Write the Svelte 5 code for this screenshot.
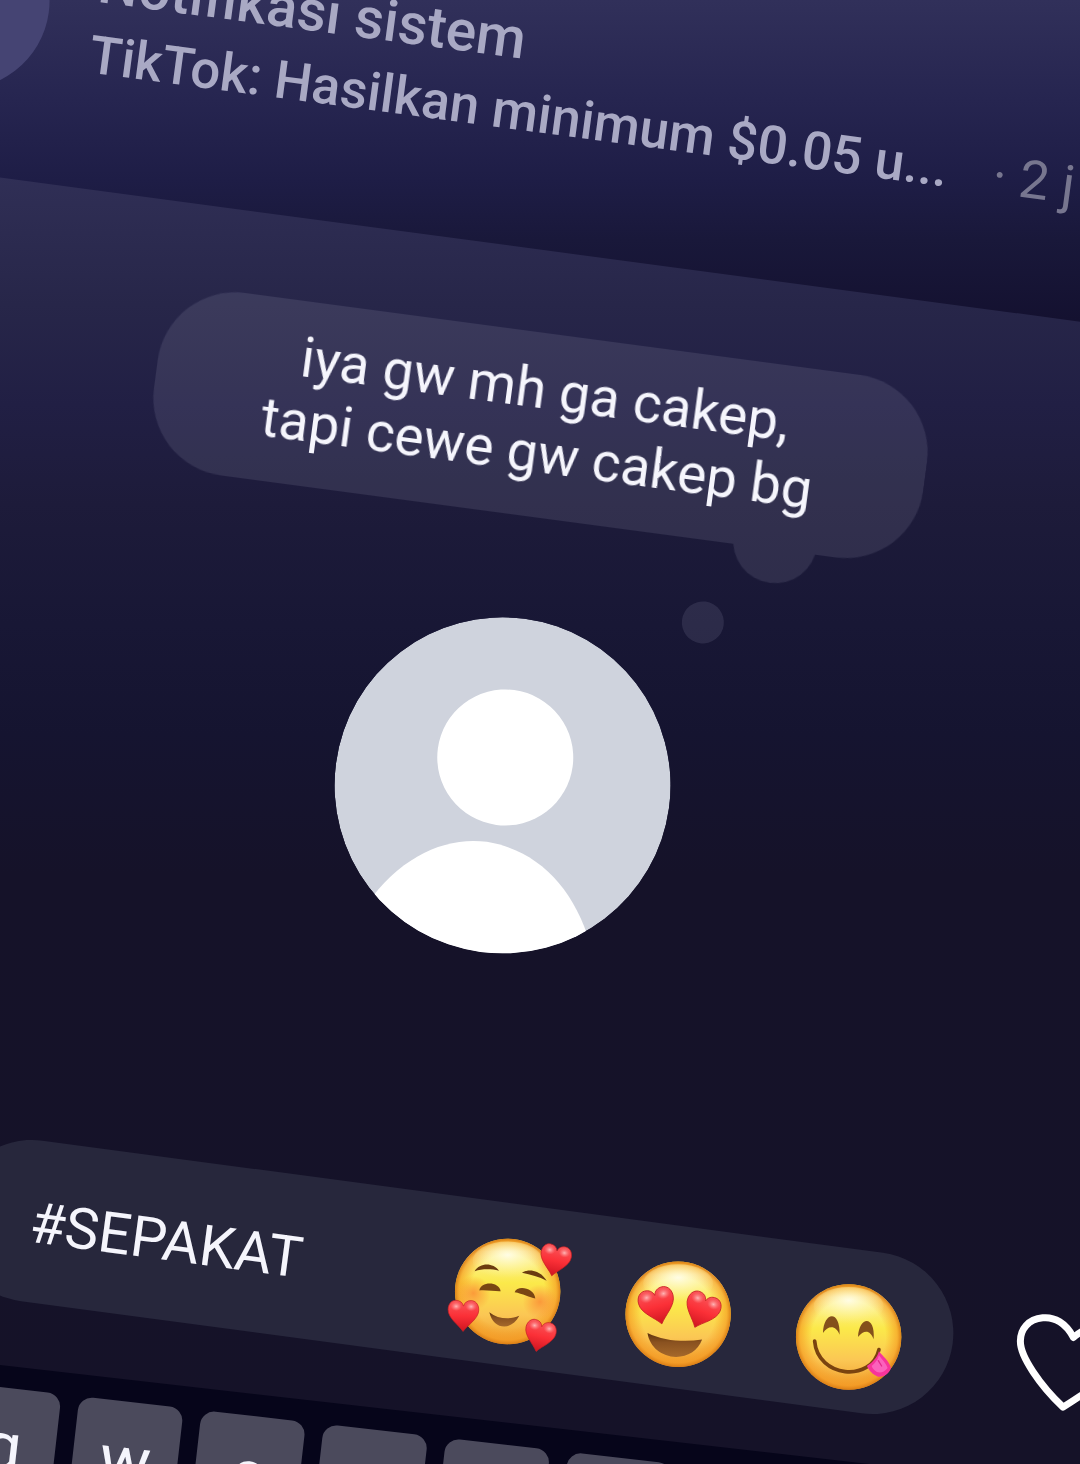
<script>
  let message = $state('#SEPAKAT');
  let liked = $state(false);

  const keys = ['q', 'w', 'e', 'r', 't', 'y', 'u', 'i', 'o', 'p'];
  const heart =
    'M0,47 C-14,27 -46,8 -46,-18 C-46,-36 -35,-46 -23,-46 C-11,-46 -3,-40 0,-29 C3,-40 11,-46 23,-46 C35,-46 46,-36 46,-18 C46,8 14,27 0,47Z';
</script>

<svelte:head>
  <title>#SEPAKAT</title>
</svelte:head>

<!-- shared gradients -->
<svg class="defs" width="0" height="0" aria-hidden="true">
  <defs>
    <linearGradient id="face" x1="0" y1="0" x2="0" y2="1">
      <stop offset="0" stop-color="#fdd23c" />
      <stop offset="0.12" stop-color="#fdf3a6" />
      <stop offset="0.42" stop-color="#fbe94a" />
      <stop offset="0.72" stop-color="#fbc754" />
      <stop offset="1" stop-color="#ee9a2c" />
    </linearGradient>
    <radialGradient id="rim" cx="0.5" cy="0.5" r="0.5">
      <stop offset="0.7" stop-color="#f79a1e" stop-opacity="0" />
      <stop offset="0.92" stop-color="#f59a22" stop-opacity="0.65" />
      <stop offset="1" stop-color="#d97c14" stop-opacity="0.95" />
    </radialGradient>
    <radialGradient id="shine" cx="0.5" cy="0.35" r="0.6">
      <stop offset="0" stop-color="#fffde8" stop-opacity="0.95" />
      <stop offset="1" stop-color="#fff7a0" stop-opacity="0" />
    </radialGradient>
    <radialGradient id="blush">
      <stop offset="0" stop-color="#fb8a35" stop-opacity="0.8" />
      <stop offset="1" stop-color="#fb8a35" stop-opacity="0" />
    </radialGradient>
    <linearGradient id="red" x1="0" y1="0" x2="0" y2="1">
      <stop offset="0" stop-color="#f9585c" />
      <stop offset="0.5" stop-color="#fb3037" />
      <stop offset="1" stop-color="#cf1420" />
    </linearGradient>
    <radialGradient id="gloss">
      <stop offset="0" stop-color="#ffc3c3" stop-opacity="0.9" />
      <stop offset="1" stop-color="#ff8a8a" stop-opacity="0" />
    </radialGradient>
    <linearGradient id="mouth" x1="0" y1="0" x2="0" y2="1">
      <stop offset="0" stop-color="#5f320c" />
      <stop offset="0.4" stop-color="#8a5220" />
      <stop offset="1" stop-color="#a5682a" />
    </linearGradient>
  </defs>
</svg>

{#snippet face(cx, cy)}
  <circle {cx} {cy} r="158" fill="url(#face)" />
  <circle {cx} {cy} r="158" fill="url(#rim)" />
  <ellipse {cx} cy={cy - 92} rx="105" ry="58" fill="url(#shine)" />
{/snippet}

{#snippet redHeart(x, y, angle, scale)}
  <g transform="translate({x} {y}) rotate({angle}) scale({scale})">
    <path d={heart} fill="url(#red)" stroke="#c51e22" stroke-width="2" />
    <ellipse cx="-22" cy="-28" rx="17" ry="14" fill="url(#gloss)" />
    <ellipse cx="23" cy="-28" rx="17" ry="14" fill="url(#gloss)" />
  </g>
{/snippet}

<main class="screen">
  <div class="stage">
    <header class="notice">
      <div class="notice-icon"></div>
      <div class="notice-text">
        <h1>Notifikasi sistem</h1>
        <p>TikTok: Hasilkan minimum $0.05 u... <time>· 2 j</time></p>
      </div>
    </header>

    <section class="sheet">
      <div class="profile">
        <div class="thought">
          <div class="cloud"></div>
          <p>iya gw mh ga cakep,<br />tapi cewe gw cakep bg</p>
          <span class="dot"></span>
        </div>

        <svg class="avatar" viewBox="-168 -168 336 336" role="img" aria-label="Avatar">
          <clipPath id="round"><circle r="168" /></clipPath>
          <g clip-path="url(#round)">
            <circle r="168" fill="#cfd3dd" />
            <circle cx="-1" cy="-28" r="68" fill="#fff" />
            <path d="M-119,136 C-92,84 -50,58 -8,58 C44,60 84,92 108,146 L108,180 L-119,180Z" fill="#fff" />
          </g>
        </svg>
      </div>

      <form class="composer" onsubmit={(e) => e.preventDefault()}>
        <div class="field">
          <input type="text" aria-label="Pesan" bind:value={message} spellcheck="false" />
          <div class="emojis">
            <button type="button" aria-label="Wajah dengan hati" onclick={() => (message += '🥰')}>
              <svg viewBox="102 54 318 318">
                <g transform="rotate(-7.6 261 213)">
                  {@render face(261, 213)}
                  <circle cx="158" cy="218" r="52" fill="url(#blush)" />
                  <circle cx="358" cy="244" r="52" fill="url(#blush)" />
                  <path d="M162,152 C178,126 218,126 235,151 C212,145 185,145 162,152Z" fill="#6b3c10" />
                  <path d="M304,157 C325,142 362,151 378,181 C356,169 330,163 304,157Z" fill="#6b3c10" />
                  <path d="M176,210 C180,182 235,182 240,212 C226,213 196,208 176,210Z" fill="#7a4613" />
                  <path d="M282,215 C290,192 342,202 344,234 C328,231 305,219 282,215Z" fill="#7a4613" />
                  <path d="M206,275 C218,328 272,332 296,286 C268,298 232,296 206,275Z" fill="url(#mouth)" />
                  {@render redHeart(403, 120, 12, 1)}
                  {@render redHeart(128, 286, 1, 1)}
                  {@render redHeart(357, 347, 13, 1)}
                </g>
              </svg>
            </button>
            <button type="button" aria-label="Mata hati" onclick={() => (message += '😍')}>
              <svg viewBox="614 123 318 318">
                <g transform="rotate(-7.6 773 282)">
                  {@render face(773, 282)}
                  {@render redHeart(711, 258, -14, 1.16)}
                  {@render redHeart(843, 272, 22, 1.13)}
                  <path d="M681,338 C730,362 790,366 845,358 C832,392 802,410 767,410 C724,408 688,382 681,338Z" fill="url(#mouth)" />
                </g>
              </svg>
            </button>
            <button type="button" aria-label="Menjulurkan lidah" onclick={() => (message += '😋')}>
              <svg viewBox="170 132 318 318">
                <g transform="rotate(-7.6 329 291)">
                  {@render face(329, 291)}
                  <path d="M252,279 C254,214 304,208 302,284 C292,256 268,254 252,279Z" fill="#84501b" />
                  <path d="M357,291 C361,226 410,226 404,298 C394,270 376,268 357,291Z" fill="#84501b" />
                  <path d="M227,303 C236,414 398,428 420,329" fill="none" stroke="#7a430f" stroke-width="11" stroke-linecap="round" />
                  <path d="M420,334 C432,350 450,362 456,384 C450,402 434,412 417,410 C402,404 390,392 384,378 C400,368 414,354 420,334Z" fill="#f7349b" />
                  <path d="M420,346 C432,362 442,372 446,384 C436,396 424,400 414,396 C404,390 400,384 398,378 C410,368 416,360 420,346Z" fill="#fb62bc" />
                  <path d="M418,362 L428,378" stroke="#e32a8c" stroke-width="4" stroke-linecap="round" />
                </g>
              </svg>
            </button>
          </div>
        </div>
        <button class="like" type="button" aria-label="Suka" aria-pressed={liked} onclick={() => (liked = !liked)}>
          <svg viewBox="822 235 330 276">
            <path
              transform="rotate(-7.6 987 373)"
              d="M997,295 C975,252 940,232 905,236 C862,240 837,270 838,308 C838,352 896,438 966,504 C1060,444 1132,396 1141,350 C1150,300 1120,268 1086,264 C1050,260 1020,274 997,295Z"
              fill="none" stroke="#fff" stroke-width="21" stroke-linejoin="round" />
          </svg>
        </button>
      </form>

      <div class="keyboard">
        {#each keys as key}
          <button type="button" onclick={() => (message += key)}>{key}</button>
        {/each}
      </div>
    </section>
  </div>
</main>

<style>
  :global(body) { margin: 0; background: #151227; }
  .defs { position: absolute; }

  .screen {
    height: 100vh;
    overflow: hidden;
    background: linear-gradient(#31305a 0, #262550 100px, #1e1d46 180px, #19183a 240px, #141130 320px);
    font-family: Roboto, "Liberation Sans", sans-serif;
    color: #f5f5fc;
  }
  h1, p { margin: 0; }
  button { border: 0; padding: 0; background: none; color: inherit; font: inherit; cursor: pointer; }
  svg { display: block; overflow: visible; }

  /* the whole phone view is tilted around the window's top left corner */
  .stage {
    width: calc(100% + 320px);
    margin-top: -144px;
    transform: rotate(7.6deg);
    transform-origin: 0 144px;
  }

  .notice { display: flex; align-items: center; gap: 46px; padding: 62px 0 82px; }
  .notice-icon { flex: none; width: 176px; height: 176px; margin-left: -126px; border-radius: 50%; background: #454473; }
  .notice-text { color: #a9a9c4; white-space: nowrap; }
  .notice-text h1 { font-size: 57px; line-height: 72px; font-weight: 500; }
  .notice-text p { font-size: 53px; line-height: 72px; font-weight: 500; }
  .notice-text time { margin-left: 32px; font-weight: 400; color: #77768f; }

  .sheet {
    padding-top: 82px;
    background: linear-gradient(172.4deg, #302f56 0, #272649 130px, #211f44 230px, #1d1b3a 330px, #181735 450px, #151430 560px, #151229 700px, #151227);
  }

  .profile { display: flex; flex-direction: column; gap: 102px; padding-left: 204px; }
  .thought { position: relative; width: 776px; padding: 24px 0 32px; text-align: center; font-size: 55px; line-height: 64px; }
  .thought p { position: relative; }
  .cloud { position: absolute; inset: 0; border-radius: 78px; background: #e4e6ff; opacity: 0.1; }
  .cloud::after { content: ''; position: absolute; right: 98px; bottom: -34px; width: 84px; height: 84px; border-radius: 50%; background: #e4e6ff; }
  .dot { position: absolute; right: 180px; bottom: -103px; width: 42px; height: 42px; border-radius: 50%; background: #e4e6ff; opacity: 0.1; }
  .avatar { width: 336px; height: 336px; margin-left: 230px; }

  .composer { display: flex; align-items: center; gap: 64px; margin-top: 245px; padding-left: 112px; }
  .field { display: flex; align-items: center; box-sizing: border-box; width: 1010px; height: 162px; padding: 4px 51px 0 80px; border-radius: 81px; background: #27273c; }
  .field input { flex: 1; min-width: 0; border: 0; padding: 0; outline: 0; background: none; color: inherit; font: inherit; font-size: 57px; line-height: 64px; }
  .emojis { display: flex; gap: 66px; padding-top: 10px; }
  .emojis svg { width: 106px; height: 106px; }
  .like { padding-top: 8px; }
  .like svg { width: 110px; height: 92px; }

  .keyboard {
    display: flex;
    gap: 18px;
    margin-top: 66px;
    padding: 22px 0 400px 140px;
    background: #06051a;
    transform: rotate(-1.1deg);
    transform-origin: 180px 0;
  }
  .keyboard button { flex: none; width: 105px; height: 118px; border-radius: 14px; background: #4b4a5c; font-size: 68px; line-height: 118px; }
</style>
